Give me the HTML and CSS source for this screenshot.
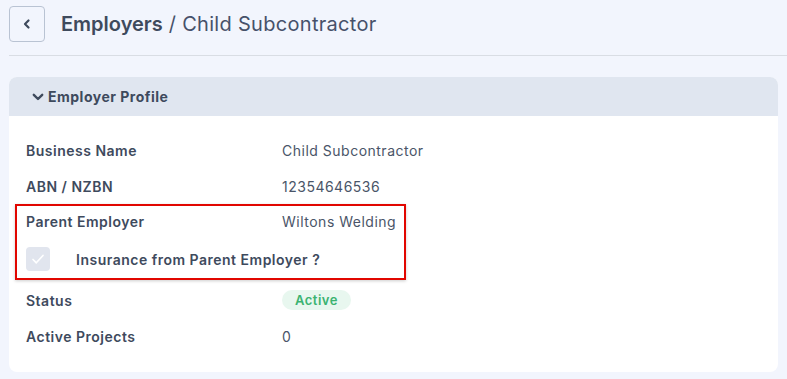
FILE: index.html
```html
<!doctype html>
<html lang="en">
   <head>
      <meta charset="UTF-8" />
      <meta name="viewport" content="width=device-width, initial-scale=1.0" />
      <title>Child Subcontractor</title>
      <link rel="stylesheet" href="styles.css">
   </head>
   <body>
      <div class="topbar">
         <button class="back" type="button" aria-label="Back">
            <svg width="12" height="12" viewBox="0 0 12 12">
               <path d="M7.5 2.5 L4 6 L7.5 9.5" fill="none" stroke="#3e4a5d" stroke-width="2.2" stroke-linecap="round" stroke-linejoin="round" />
            </svg>
         </button>
         <h1 class="title"><span class="crumb">Employers</span> / Child Subcontractor</h1>
      </div>
      <div class="content">
         <div class="card">
            <div class="card-head">
               <svg class="chev" width="12" height="12" viewBox="0 0 12 12">
                  <path d="M1.8 3.8 L6 8 L10.2 3.8" fill="none" stroke="#3e4a5d" stroke-width="2.4" stroke-linecap="round" stroke-linejoin="round" />
               </svg>
               <span>Employer Profile</span>
            </div>
            <div class="card-body">
               <div class="row">
                  <div class="label">Business Name</div>
                  <div class="value">Child Subcontractor</div>
               </div>
               <div class="row">
                  <div class="label">ABN / NZBN</div>
                  <div class="value">12354646536</div>
               </div>
               <div class="highlight">
                  <div class="row parent">
                     <div class="label">Parent Employer</div>
                     <div class="value">Wiltons Welding</div>
                  </div>
                  <div class="check-row">
                     <span class="checkbox">
                        <svg width="16" height="16" viewBox="0 0 16 16">
                           <path d="M3 8.5 L6.3 11.8 L13 4.5" fill="none" stroke="#fff" stroke-width="1.7" stroke-linecap="round" stroke-linejoin="round" />
                        </svg>
                     </span>
                     <span class="label">Insurance from Parent Employer ?</span>
                  </div>
               </div>
               <div class="row status">
                  <div class="label">Status</div>
                  <div class="value"><span class="badge">Active</span></div>
               </div>
               <div class="row projects">
                  <div class="label">Active Projects</div>
                  <div class="value">0</div>
               </div>
            </div>
         </div>
      </div>
   </body>
</html>
```

FILE: styles.css
```css
* {
   margin: 0;
   padding: 0;
   box-sizing: border-box;
   font-family: "Inter", sans-serif;
}
body {
   background: #f2f5fd;
   color: #3e4a5d;
   letter-spacing: 0.5px;
}
.topbar {
   display: flex;
   align-items: center;
   gap: 16px;
   height: 56px;
   margin-left: 9px;
   padding-bottom: 7px;
   border-bottom: 1px solid #d9dde4;
}
.back {
   display: flex;
   align-items: center;
   justify-content: center;
   width: 36px;
   height: 36px;
   background: transparent;
   border: 1px solid #b9c3d3;
   border-radius: 4px;
   cursor: pointer;
}
.title {
   font-size: 20px;
   font-weight: 400;
   color: #46516a;
   letter-spacing: 0.3px;
}
.crumb {
   font-weight: 600;
   color: #3e4a5d;
   letter-spacing: 0;
}
.content {
   padding: 21px 9px 7px 9px;
}
.card {
   background: #fff;
   border-radius: 8px;
}
.card-head {
   display: flex;
   align-items: center;
   gap: 4px;
   height: 39px;
   padding-left: 23px;
   background: #e0e6f0;
   border-radius: 8px 8px 0 0;
   font-size: 14px;
   font-weight: 700;
}
.card-body {
   padding: 16px 17px 20px 17px;
}
.row {
   display: flex;
   align-items: center;
   height: 36px;
   font-size: 14px;
}
.label {
   width: 256px;
   font-weight: 600;
   color: #3e4a5d;
}
.value {
   color: #4a5568;
}
.highlight {
   width: 391px;
   margin-left: -11px;
   padding-left: 9px;
   border: 2px solid #e10600;
   box-shadow: 0 1px 3px rgba(0, 0, 0, 0.2);
}
.row.parent {
   height: 30px;
}
.check-row {
   display: flex;
   align-items: center;
   gap: 26px;
   padding: 11px 0 7px 0;
   font-size: 14px;
}
.checkbox {
   display: flex;
   align-items: center;
   justify-content: center;
   width: 24px;
   height: 24px;
   background: #e1e5ee;
   border-radius: 4px;
}
.check-row .label {
   width: auto;
}
.row.status {
   height: 40px;
}
.row.projects {
   height: 32px;
}
.badge {
   display: inline-block;
   padding: 2px 13px;
   background: #e8f7ef;
   color: #3bb371;
   font-weight: 600;
   font-size: 13px;
   border-radius: 11px;
}
```
